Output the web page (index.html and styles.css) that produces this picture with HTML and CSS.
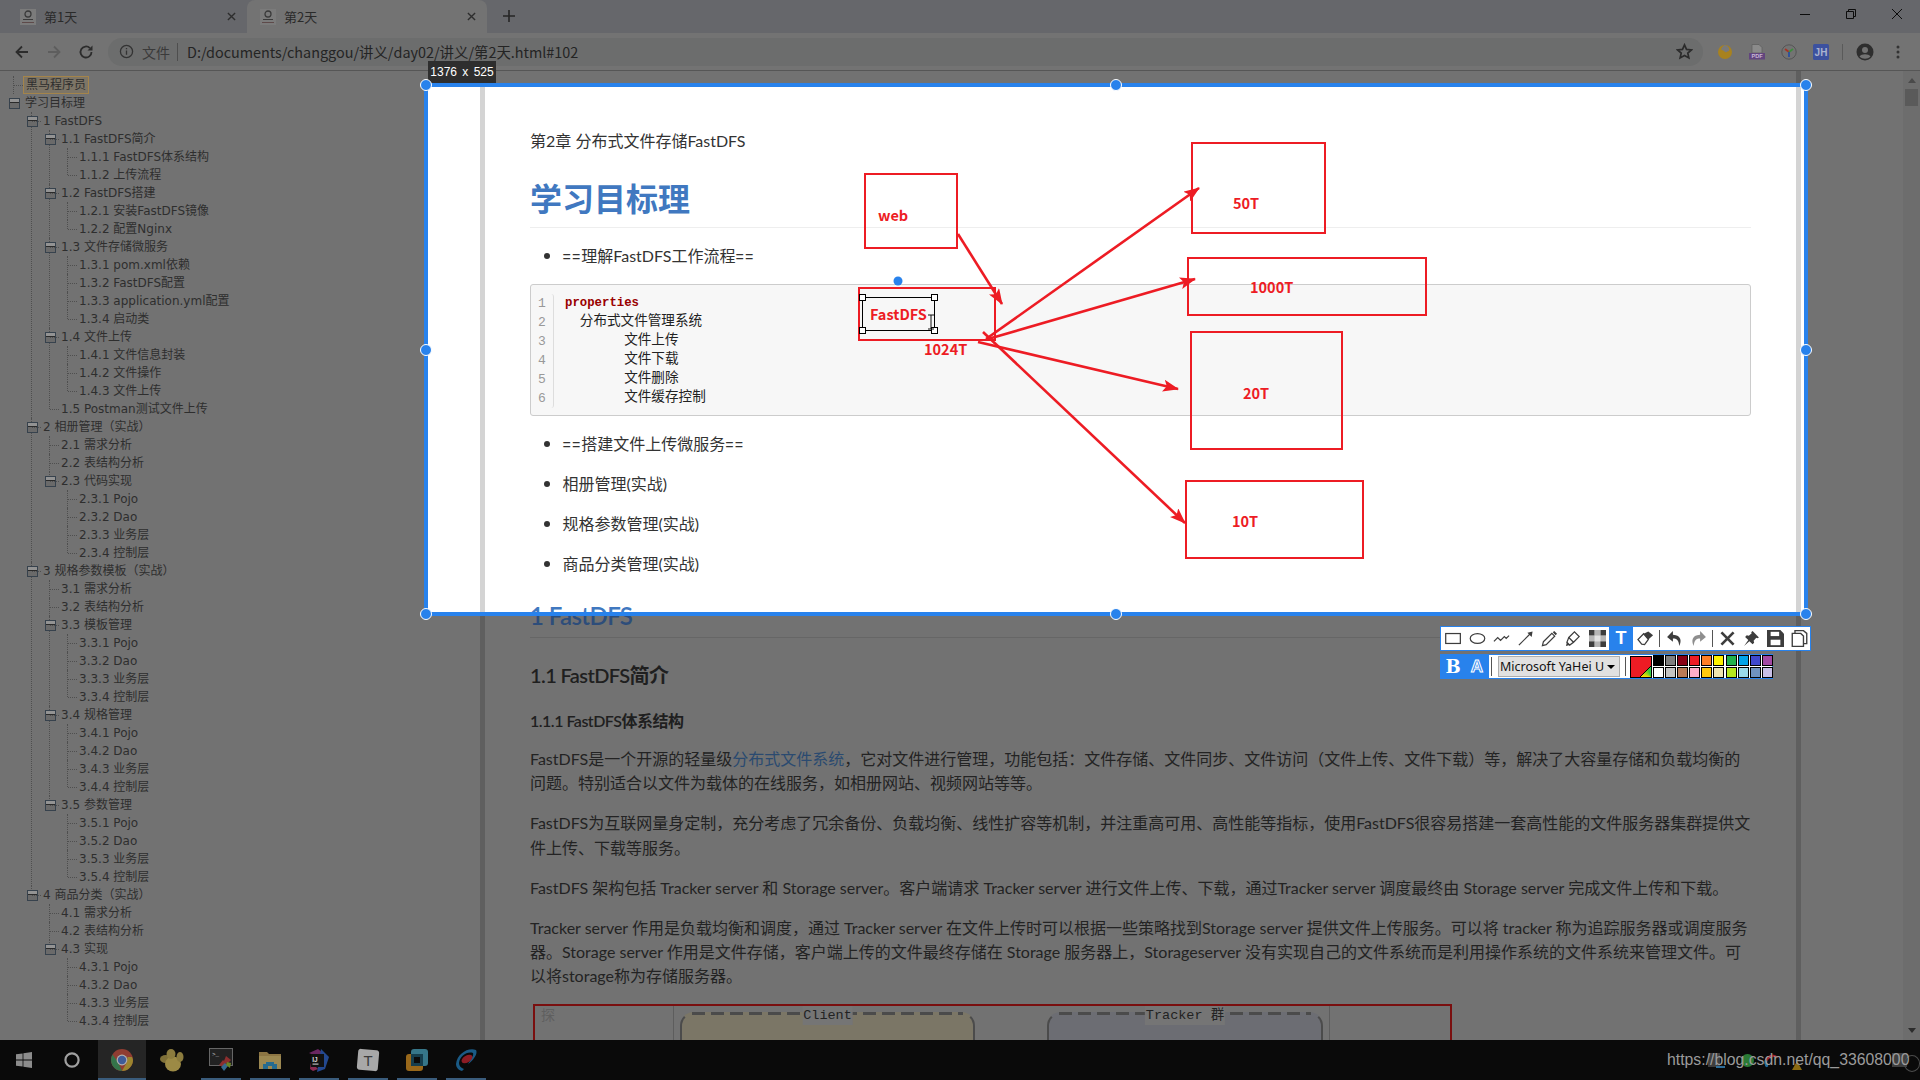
FILE: index.html
```html
<!DOCTYPE html>
<html lang="zh-CN">
<head>
<meta charset="utf-8">
<title>第2天</title>
<link rel="stylesheet" href="styles.css">
</head>
<body>
<div class="screen">

  <header class="tabbar">
    <div class="tab">
      <svg class="favicon" viewBox="0 0 16 16"><rect width="16" height="16" fill="#7b7b7b"/><circle cx="8" cy="5" r="3" fill="none" stroke="#3a3a3a" stroke-width="1.3"/><path d="M3 10h10v1H3z" fill="#3a3a3a"/><path d="M2 13h12v1H2z" fill="#5e4a4a"/></svg>
      <span class="tab-title">第1天</span>
      <svg class="tab-x" viewBox="0 0 10 10"><path d="M1 1l8 8M9 1L1 9"/></svg>
    </div>
    <div class="tab active">
      <svg class="favicon" viewBox="0 0 16 16"><rect width="16" height="16" fill="#7b7b7b"/><circle cx="8" cy="5" r="3" fill="none" stroke="#3a3a3a" stroke-width="1.3"/><path d="M3 10h10v1H3z" fill="#3a3a3a"/><path d="M2 13h12v1H2z" fill="#5e4a4a"/></svg>
      <span class="tab-title">第2天</span>
      <svg class="tab-x" viewBox="0 0 10 10"><path d="M1 1l8 8M9 1L1 9"/></svg>
    </div>
    <svg class="tab-new" viewBox="0 0 12 12"><path d="M6 0v12M0 6h12"/></svg>
    <div class="win-controls">
      <svg viewBox="0 0 12 12"><path d="M1 6.5h10"/></svg>
      <svg viewBox="0 0 12 12"><path d="M1.5 3.5h7v7h-7zM3.5 3.5v-2h7v7h-2"/></svg>
      <svg viewBox="0 0 12 12"><path d="M1 1l10 10M11 1L1 11"/></svg>
    </div>
  </header>

  <nav class="toolbar">
    <svg class="nav-ico" viewBox="0 0 16 16"><path d="M14 8H3M8 2.5L2.5 8 8 13.5"/></svg>
    <svg class="nav-ico faded" viewBox="0 0 16 16"><path d="M2 8h11M8 2.5L13.5 8 8 13.5"/></svg>
    <svg class="nav-ico" viewBox="0 0 16 16"><path d="M13.5 8a5.5 5.5 0 1 1-1.6-3.9"/><path class="fill" d="M14.5 1.5v5h-5z"/></svg>
    <div class="omnibox">
      <svg class="info" viewBox="0 0 16 16"><circle cx="8" cy="8" r="6.5"/><path d="M8 7v4.5M8 4.2v1.4"/></svg>
      <span class="scheme">文件</span>
      <span class="omni-sep"></span>
      <span class="url">D:/documents/changgou/讲义/day02/讲义/第2天.html#102</span>
      <svg class="star" viewBox="0 0 16 16"><path d="M8 1.8l1.9 4.2 4.6.5-3.4 3 1 4.5L8 11.7 3.9 14l1-4.5-3.4-3 4.6-.5z"/></svg>
    </div>
    <div class="ext-row">
      <svg class="ext" viewBox="0 0 16 16"><circle cx="8" cy="8" r="7" fill="#a8821f"/><path d="M8 1c3 1 5 3 4 6-2 0-2 2-4 1-1-2-3-1-4-3 1-2 2-3 4-4z" fill="#7a7a7a"/></svg>
      <svg class="ext" viewBox="0 0 16 16"><path d="M3 .5h7l3 3V9H3z" fill="#8b8b8b" stroke="#5c5c5c" stroke-width=".7"/><rect y="9" width="16" height="6.5" fill="#62457e"/><text class="ext-pdf" x="8" y="14.4">PDF</text></svg>
      <svg class="ext" viewBox="0 0 16 16"><circle cx="8" cy="8" r="7.2" fill="none" stroke="#555"/><path d="M8 8L4 5" stroke="#a63327" stroke-width="1.8"/><path d="M8 8l4-3" stroke="#3f8a3f" stroke-width="1.8"/><path d="M8 8v5" stroke="#2b4f9e" stroke-width="1.8"/></svg>
      <svg class="ext" viewBox="0 0 16 16"><rect width="16" height="16" rx="1.5" fill="#3c519f"/><text class="ext-jh" x="8" y="11.5">JH</text></svg>
    </div>
    <span class="tool-sep"></span>
    <svg class="avatar" viewBox="0 0 18 18"><circle cx="9" cy="9" r="8.5" fill="#2e2e2e"/><circle cx="9" cy="7" r="3" fill="#727272"/><path d="M3.5 13.5c2-3 9-3 11 0-3 3-8 3-11 0z" fill="#727272"/></svg>
    <svg class="kebab" viewBox="0 0 4 14"><circle cx="2" cy="2" r="1.5"/><circle cx="2" cy="7" r="1.5"/><circle cx="2" cy="12" r="1.5"/></svg>
  </nav>

  <main class="page">
    <aside class="sidebar">
      <ul class="tree root">
        <li class="first"><div class="row sel"><span class="label">黑马程序员</span></div></li>
        <li><div class="row open"><span class="label">学习目标理</span></div>
          <ul class="tree">
            <li class="cont"><div class="row open"><span class="label">1 FastDFS</span></div>
              <ul class="tree">
                <li class="cont"><div class="row open"><span class="label">1.1 FastDFS简介</span></div>
                  <ul class="tree">
                    <li class="cont"><div class="row"><span class="label">1.1.1 FastDFS体系结构</span></div></li>
                    <li><div class="row"><span class="label">1.1.2 上传流程</span></div></li>
                  </ul></li>
                <li class="cont"><div class="row open"><span class="label">1.2 FastDFS搭建</span></div>
                  <ul class="tree">
                    <li class="cont"><div class="row"><span class="label">1.2.1 安装FastDFS镜像</span></div></li>
                    <li><div class="row"><span class="label">1.2.2 配置Nginx</span></div></li>
                  </ul></li>
                <li class="cont"><div class="row open"><span class="label">1.3 文件存储微服务</span></div>
                  <ul class="tree">
                    <li class="cont"><div class="row"><span class="label">1.3.1 pom.xml依赖</span></div></li>
                    <li class="cont"><div class="row"><span class="label">1.3.2 FastDFS配置</span></div></li>
                    <li class="cont"><div class="row"><span class="label">1.3.3 application.yml配置</span></div></li>
                    <li><div class="row"><span class="label">1.3.4 启动类</span></div></li>
                  </ul></li>
                <li class="cont"><div class="row open"><span class="label">1.4 文件上传</span></div>
                  <ul class="tree">
                    <li class="cont"><div class="row"><span class="label">1.4.1 文件信息封装</span></div></li>
                    <li class="cont"><div class="row"><span class="label">1.4.2 文件操作</span></div></li>
                    <li><div class="row"><span class="label">1.4.3 文件上传</span></div></li>
                  </ul></li>
                <li><div class="row"><span class="label">1.5 Postman测试文件上传</span></div></li>
              </ul></li>
            <li class="cont"><div class="row open"><span class="label">2 相册管理（实战）</span></div>
              <ul class="tree">
                <li class="cont"><div class="row"><span class="label">2.1 需求分析</span></div></li>
                <li class="cont"><div class="row"><span class="label">2.2 表结构分析</span></div></li>
                <li><div class="row open"><span class="label">2.3 代码实现</span></div>
                  <ul class="tree">
                    <li class="cont"><div class="row"><span class="label">2.3.1 Pojo</span></div></li>
                    <li class="cont"><div class="row"><span class="label">2.3.2 Dao</span></div></li>
                    <li class="cont"><div class="row"><span class="label">2.3.3 业务层</span></div></li>
                    <li><div class="row"><span class="label">2.3.4 控制层</span></div></li>
                  </ul></li>
              </ul></li>
            <li class="cont"><div class="row open"><span class="label">3 规格参数模板（实战）</span></div>
              <ul class="tree">
                <li class="cont"><div class="row"><span class="label">3.1 需求分析</span></div></li>
                <li class="cont"><div class="row"><span class="label">3.2 表结构分析</span></div></li>
                <li class="cont"><div class="row open"><span class="label">3.3 模板管理</span></div>
                  <ul class="tree">
                    <li class="cont"><div class="row"><span class="label">3.3.1 Pojo</span></div></li>
                    <li class="cont"><div class="row"><span class="label">3.3.2 Dao</span></div></li>
                    <li class="cont"><div class="row"><span class="label">3.3.3 业务层</span></div></li>
                    <li><div class="row"><span class="label">3.3.4 控制层</span></div></li>
                  </ul></li>
                <li class="cont"><div class="row open"><span class="label">3.4 规格管理</span></div>
                  <ul class="tree">
                    <li class="cont"><div class="row"><span class="label">3.4.1 Pojo</span></div></li>
                    <li class="cont"><div class="row"><span class="label">3.4.2 Dao</span></div></li>
                    <li class="cont"><div class="row"><span class="label">3.4.3 业务层</span></div></li>
                    <li><div class="row"><span class="label">3.4.4 控制层</span></div></li>
                  </ul></li>
                <li><div class="row open"><span class="label">3.5 参数管理</span></div>
                  <ul class="tree">
                    <li class="cont"><div class="row"><span class="label">3.5.1 Pojo</span></div></li>
                    <li class="cont"><div class="row"><span class="label">3.5.2 Dao</span></div></li>
                    <li class="cont"><div class="row"><span class="label">3.5.3 业务层</span></div></li>
                    <li><div class="row"><span class="label">3.5.4 控制层</span></div></li>
                  </ul></li>
              </ul></li>
            <li><div class="row open"><span class="label">4 商品分类（实战）</span></div>
              <ul class="tree">
                <li class="cont"><div class="row"><span class="label">4.1 需求分析</span></div></li>
                <li class="cont"><div class="row"><span class="label">4.2 表结构分析</span></div></li>
                <li><div class="row open"><span class="label">4.3 实现</span></div>
                  <ul class="tree">
                    <li class="cont"><div class="row"><span class="label">4.3.1 Pojo</span></div></li>
                    <li class="cont"><div class="row"><span class="label">4.3.2 Dao</span></div></li>
                    <li class="cont"><div class="row"><span class="label">4.3.3 业务层</span></div></li>
                    <li><div class="row"><span class="label">4.3.4 控制层</span></div></li>
                  </ul></li>
              </ul></li>
          </ul></li>
      </ul>
    </aside>

    <div class="strip"></div>
    <article class="doc dim below">
      <h2>1 FastDFS</h2>
      <h3>1.1 FastDFS简介</h3>
      <h4>1.1.1 FastDFS体系结构</h4>
      <p>FastDFS是一个开源的轻量级<a>分布式文件系统</a>，它对文件进行管理，功能包括：文件存储、文件同步、文件访问（文件上传、文件下载）等，解决了大容量存储和负载均衡的<br>问题。特别适合以文件为载体的在线服务，如相册网站、视频网站等等。</p>
      <p>FastDFS为互联网量身定制，充分考虑了冗余备份、负载均衡、线性扩容等机制，并注重高可用、高性能等指标，使用FastDFS很容易搭建一套高性能的文件服务器集群提供文<br>件上传、下载等服务。</p>
      <p>FastDFS 架构包括 Tracker server 和 Storage server。客户端请求 Tracker server 进行文件上传、下载，通过Tracker server 调度最终由 Storage server 完成文件上传和下载。</p>
      <p>Tracker server 作用是负载均衡和调度，通过 Tracker server 在文件上传时可以根据一些策略找到Storage server 提供文件上传服务。可以将 tracker 称为追踪服务器或调度服务<br>器。Storage server 作用是文件存储，客户端上传的文件最终存储在 Storage 服务器上，Storageserver 没有实现自己的文件系统而是利用操作系统的文件系统来管理文件。可<br>以将storage称为存储服务器。</p>
      <div class="figure">
        <div class="fig-left">探</div>
        <div class="fig-mid">
          <div class="group client"><span class="group-label">Client</span></div>
          <div class="group tracker"><span class="group-label">Tracker 群</span></div>
        </div>
      </div>
    </article>
    <div class="strip"></div>
    <div class="page-rest"></div>
    <div class="scrollbar">
      <span class="sb-up"></span>
      <span class="sb-thumb"></span>
      <span class="sb-down"></span>
    </div>
  </main>

  <footer class="taskbar">
    <svg class="start" viewBox="0 0 16 16"><path d="M0 2.3l6.6-.9v6.2H0zM7.4 1.3L16 0v7.6H7.4zM0 8.4h6.6v6.2L0 13.7zM7.4 8.4H16V16l-8.6-1.3z"/></svg>
    <svg class="cortana" viewBox="0 0 16 16"><circle cx="8" cy="8" r="6.6"/></svg>
    <div class="app current"><svg viewBox="0 0 24 24"><circle cx="12" cy="12" r="11" fill="#8f3d32"/><path d="M12 23A11 11 0 0 1 2.5 6.5L8 14z" fill="#34744a"/><path d="M23 12a11 11 0 0 1-11 11l5-9 .5-5H22z" fill="#9c852f"/><circle cx="12" cy="12" r="5.4" fill="#b0b0b0"/><circle cx="12" cy="12" r="4.2" fill="#3f5c99"/></svg><i></i></div>
    <div class="app"><svg viewBox="0 0 24 24"><ellipse cx="5.5" cy="11" rx="5.5" ry="4" fill="#7f7038"/><ellipse cx="13" cy="16" rx="8" ry="7.5" fill="#9c8a45"/><ellipse cx="20" cy="9" rx="3.5" ry="5" fill="#8c7c3e"/><ellipse cx="11" cy="6" rx="4.500" ry="5" fill="#8c7c3e"/></svg><i class="off"></i></div>
    <div class="app"><svg viewBox="0 0 24 24"><rect x="0.5" y="0.5" width="23" height="17" fill="#222" stroke="#666"/><path d="M10 17l4-5 3 3-3 4zM17 8l5 4-4 4-3-3z" fill="#8c2e2e"/><path d="M12 19l4-4 3 3-4 5z" fill="#35698c"/><path d="M18 14l4 1-1 5-4-3z" fill="#6a8326"/><text class="term" x="3" y="8">&gt;_</text></svg><i></i></div>
    <div class="app"><svg viewBox="0 0 24 24"><path d="M1 4h8l2 2h12v15H1z" fill="#8c7543"/><path d="M1 8h22v13H1z" fill="#9c8851"/><path d="M8 14h8v2h3v5h-5v-3h-4v3H5v-5h3z" fill="#266b8f"/></svg><i></i></div>
    <div class="app"><svg viewBox="0 0 24 24"><path d="M2 5l9-4 5 4-5 4z" fill="#692661"/><path d="M14 1l8 8-4 12-8 3z" fill="#23488f"/><path d="M4 14l7 7-5 2-3-2z" fill="#8c2b52"/><rect x="4" y="6" width="13" height="13" fill="#111"/><text class="ij" x="5.2" y="13.5">IJ</text><rect x="5.5" y="15.500" width="6" height="1.2" fill="#bbb"/></svg><i></i></div>
    <div class="app"><svg viewBox="0 0 24 24"><rect x="1.5" y="1.5" width="21" height="21" rx="3" fill="#a8a8a8" transform="rotate(5 12 12)"/><text class="typora" x="12" y="17.5">T</text></svg><i></i></div>
    <div class="app"><svg viewBox="0 0 24 24"><rect x="6" y="1" width="17" height="17" rx="3" fill="#367689"/><rect x="1" y="6" width="17" height="17" rx="3" fill="#99681a"/><rect x="6" y="6" width="12" height="12" fill="#163e4d"/><rect x="9" y="9" width="6" height="6" fill="#0a0a0a"/></svg><i></i></div>
    <div class="app"><svg viewBox="0 0 24 24"><path d="M2 16C3 6 14-1 22 2c2 3-2 10-8 14 3-5 6-9 5-11C13 3 6 8 5 15c0 3 2 5 5 6l-2 2c-4-1-6-4-6-7z" fill="#1a5a85"/><ellipse cx="13" cy="11" rx="6" ry="3.4" transform="rotate(-30 13 11)" fill="#8c1c24"/></svg><i></i></div>
    <div class="tray">
      <span class="tray-grid"></span>
      <span class="tray-bar"></span>
      <span class="tray-green"></span>
      <span class="tray-swoosh"></span>
      <span class="tray-warn"></span>
      <span class="tray-box"></span>
      <span class="tray-action"></span>
    </div>
  </footer>

  <section class="selection">
    <div class="size-tip">1376 x 525</div>
    <div class="sel-clip">
      <div class="gutter-white"></div>
      <div class="strip lit-strip"></div>
      <article class="doc lit">
        <div class="chapter">第2章 分布式文件存储FastDFS</div>
        <h1>学习目标理</h1>
        <ul class="bullets top">
          <li><span class="eq">==</span>理解FastDFS工作流程<span class="eq">==</span></li>
        </ul>
        <div class="code">
          <div class="lines"><span>1</span><span>2</span><span>3</span><span>4</span><span>5</span><span>6</span></div>
          <pre class="src"><b>properties</b>
  <span class="zh">分布式文件管理系统</span>
        <span class="zh">文件上传</span>
        <span class="zh">文件下载</span>
        <span class="zh">文件删除</span>
        <span class="zh">文件缓存控制</span></pre>
        </div>
        <ul class="bullets">
          <li><span class="eq">==</span>搭建文件上传微服务<span class="eq">==</span></li>
          <li>相册管理(实战)</li>
          <li>规格参数管理(实战)</li>
          <li>商品分类管理(实战)</li>
        </ul>
        <h2>1 FastDFS</h2>
      </article>
      <div class="strip lit-strip"></div>
      <div class="gutter-white thin"></div>

      <svg class="marks" viewBox="428 87 1376 525">
        <defs>
          <marker id="head" markerUnits="userSpaceOnUse" markerWidth="16" markerHeight="12" viewBox="0 0 16 12" refX="15" refY="6" orient="auto">
            <path d="M0 0L16 6 0 12 3.5 6z" fill="#ed1c24"/>
          </marker>
        </defs>
        <g class="box">
          <rect x="865" y="174" width="92" height="74"/>
          <rect x="859" y="288" width="136" height="52"/>
          <rect x="1192" y="143" width="133" height="90"/>
          <rect x="1188" y="258" width="238" height="57"/>
          <rect x="1191" y="332" width="151" height="117"/>
          <rect x="1186" y="481" width="177" height="77"/>
        </g>
        <g class="arrow">
          <line x1="958" y1="234" x2="1002" y2="304"/>
          <line x1="986" y1="339" x2="1199" y2="188"/>
          <line x1="988" y1="339" x2="1195" y2="279"/>
          <line x1="978" y1="342" x2="1178" y2="389"/>
          <line x1="983" y1="332" x2="1185" y2="523"/>
        </g>
        <g class="mark-text">
          <text x="878" y="221">web</text>
          <text x="870" y="320">FastDFS</text>
          <text x="924" y="355">1024T</text>
          <text x="1233" y="209">50T</text>
          <text x="1250" y="293">1000T</text>
          <text x="1243" y="399">20T</text>
          <text x="1232" y="527">10T</text>
        </g>
        <rect class="text-frame" x="862.5" y="297.5" width="72" height="33"/>
        <g class="frame-handles">
          <rect x="859.5" y="294.5" width="6" height="6"/>
          <rect x="931.5" y="294.5" width="6" height="6"/>
          <rect x="859.5" y="327.5" width="6" height="6"/>
          <rect x="931.5" y="327.5" width="6" height="6"/>
        </g>
        <path class="ibeam" d="M928 315h6M931 315v14M928 329h6"/>
        <circle class="rotate" cx="898" cy="281" r="4.5"/>
      </svg>
    </div>
    <span class="handle h-tl"></span><span class="handle h-tc"></span><span class="handle h-tr"></span>
    <span class="handle h-ml"></span><span class="handle h-mr"></span>
    <span class="handle h-bl"></span><span class="handle h-bc"></span><span class="handle h-br"></span>
  </section>

  <div class="snip-tools">
    <div class="snip-row">
      <span class="tb"><svg viewBox="0 0 18 14"><rect x=".75" y="1.75" width="15.5" height="10.5"/></svg></span>
      <span class="tb"><svg viewBox="0 0 18 14"><ellipse cx="9" cy="7" rx="7.7" ry="5.2"/></svg></span>
      <span class="tb"><svg viewBox="0 0 18 14"><path d="M1 10l4-4 3 3 4-4 2 2 3-3"/></svg></span>
      <span class="tb"><svg viewBox="0 0 18 18"><path d="M2 16L14 4"/><path class="solid" d="M16.5 1.5l-1 6-4.5-4.500z"/></svg></span>
      <span class="tb"><svg viewBox="0 0 18 18"><path d="M2.500 12.500L11.500 3.500l3 3-9 9-4 1z"/><path class="solid" d="M12.500 2.500l1.500-1.500 3 3-1.500 1.500z"/></svg></span>
      <span class="tb"><svg viewBox="0 0 18 18"><path d="M4 8l6-6 5 5-6 6z"/><path d="M4 8l-2 5 3 3 4-3"/><path class="solid" d="M2 13l3 3-4 1z"/></svg></span>
      <span class="tb"><svg viewBox="0 0 15 15"><rect class="mo" width="5" height="5"/><rect class="mo" x="10" width="5" height="5"/><rect class="mo mid" x="5" y="5" width="5" height="5"/><rect class="mo lt" x="5" width="5" height="5"/><rect class="mo lt" y="5" width="5" height="5"/><rect class="mo lt" x="10" y="5" width="5" height="5"/><rect class="mo" y="10" width="5" height="5"/><rect class="mo lt" x="5" y="10" width="5" height="5"/><rect class="mo" x="10" y="10" width="5" height="5"/></svg></span>
      <span class="tb on"><span class="tb-t">T</span></span>
      <span class="tb"><svg viewBox="0 0 18 16"><path class="solid" d="M7 3l5-2.500 5 4-5 4.500z"/><path d="M7 3L1 9l4 5 3 .5 4-5.500z"/></svg></span>
      <span class="snip-sep"></span>
      <span class="tb"><svg viewBox="0 0 16 16"><path class="solid" d="M6.500 1L1 6.500 6.500 11V8c3.500 0 5.500 1.500 6 7 2-4 2.500-10-6-10.500z"/></svg></span>
      <span class="tb"><svg viewBox="0 0 16 16"><path class="solid grey" d="M9.500 1L15 6.500 9.500 11V8c-3.500 0-5.500 1.500-6 7-2-4-2.500-10 6-10.500z"/></svg></span>
      <span class="snip-sep"></span>
      <span class="tb"><svg viewBox="0 0 14 14"><path class="heavy" d="M2 2l10 10M12 2L2 12"/></svg></span>
      <span class="tb"><svg viewBox="0 0 16 16"><path class="solid" d="M9 1l6 6-1.500.8-1-.5L10 10l.5 2-1.500 1.500-3-3L1 15l4-5.500-3-3L3.500 5l2 .5 2.700-2.500-.5-1z"/></svg></span>
      <span class="tb"><svg viewBox="0 0 14 14"><path class="solid" d="M0 0h11l3 3v11H0z"/><rect class="hole" x="3" y="1.500" width="7" height="3.500"/><rect class="hole" x="3" y="8" width="8" height="4.500"/></svg></span>
      <span class="tb"><svg viewBox="0 0 14 15"><path class="copy" d="M3 3V.6h7.500L13.400 3v9H10.500M.6 3h7.500l2.400 2.400v9H.6z"/></svg></span>
    </div>
    <div class="snip-row second">
      <div class="style-btns">
        <span class="tb"><span class="tb-b">B</span></span>
        <span class="tb"><span class="tb-a">A</span></span>
      </div>
      <span class="opt-sep"></span>
      <div class="font-select"><span class="font-name">Microsoft YaHei U</span><span class="caret"></span></div>
      <span class="opt-sep right"></span>
      <div class="color-now"></div>
      <div class="swatches">
        <i class="c1"></i><i class="c2"></i><i class="c3"></i><i class="c4"></i><i class="c5"></i><i class="c6"></i><i class="c7"></i><i class="c8"></i><i class="c9"></i><i class="c10"></i>
        <i class="c11"></i><i class="c12"></i><i class="c13"></i><i class="c14"></i><i class="c15"></i><i class="c16"></i><i class="c17"></i><i class="c18"></i><i class="c19"></i><i class="c20"></i>
      </div>
    </div>
  </div>

  <div class="watermark">https://blog.csdn.net/qq_33608000</div>
</div>
</body>
</html>
```
FILE: styles.css
```css
* { box-sizing: border-box; }
html, body { margin: 0; padding: 0; }
body { background: #000; font-family: "Noto Sans CJK SC", "Noto Sans", sans-serif; }
ul { list-style: none; margin: 0; padding: 0; }

.screen { position: relative; width: 1920px; height: 1080px; overflow: hidden; display: flex; flex-direction: column; background: #727272; }

/* Tab strip */
.tabbar { height: 33px; flex: none; display: flex; align-items: stretch; background: #66676b; }
.tab { width: 240px; margin-left: 7px; display: flex; align-items: center; padding: 0 10px 0 13px; color: #2a2a2a; font-size: 13px; }
.tab.active { background: #737373; border-radius: 8px 8px 0 0; margin-left: 0; padding-left: 13px; }
.favicon { width: 16px; height: 16px; flex: none; }
.tab-title { margin-left: 8px; flex: 1; }
.tab-x { width: 9px; height: 9px; fill: none; stroke: #2d2d2d; stroke-width: 1.5; margin-right: 1px; }
.tab-new { width: 12px; height: 12px; margin: 10px 0 0 16px; fill: none; stroke: #262626; stroke-width: 1.6; }
.win-controls { margin-left: auto; display: flex; align-items: center; gap: 34px; padding-right: 17px; }
.win-controls svg { width: 12px; height: 12px; fill: none; stroke: #0c0c0c; stroke-width: 1; margin-top: -5px; }

/* Address toolbar */
.toolbar { height: 38px; flex: none; display: flex; align-items: center; background: #737373; border-bottom: 1px solid #565656; padding-left: 14px; }
.nav-ico { width: 16px; height: 16px; margin-right: 16px; fill: none; stroke: #2c2c2c; stroke-width: 1.8; flex: none; }
.nav-ico.faded { stroke: #5e5e5e; }
.nav-ico .fill { fill: #2c2c2c; stroke: none; }
.omnibox { width: 1595px; margin-left: -2px; height: 28px; flex: none; border-radius: 14px; background: #6c6d6d; display: flex; align-items: center; padding-left: 11px; color: #242424; }
.info { width: 15px; height: 15px; fill: none; stroke: #333; stroke-width: 1.4; flex: none; }
.scheme { margin-left: 8px; font-size: 14px; color: #3a3a3a; }
.omni-sep { width: 1px; height: 18px; background: #4e4e4e; margin: 0 9px 0 7px; }
.url { font-size: 14.4px; }
.star { width: 17px; height: 17px; margin-left: auto; margin-right: 10px; fill: none; stroke: #2b2b2b; stroke-width: 1.6; }
.ext-row { display: flex; gap: 16px; margin-left: 14px; }
.ext { width: 16px; height: 16px; }
.ext-pdf { font: bold 5.6px "Liberation Sans", sans-serif; text-anchor: middle; fill: #c9b9d6; }
.ext-jh { font: bold 10px "Liberation Sans", sans-serif; text-anchor: middle; fill: #aab3cf; }
.tool-sep { width: 1px; height: 16px; background: #5a5a5a; margin: 0 13px; }
.avatar { width: 18px; height: 18px; }
.kebab { width: 4px; height: 14px; margin-left: 22px; fill: #333; }

/* Page area */
.page { flex: 1; min-height: 0; display: flex; background: #727272; }
.sidebar { width: 480px; flex: none; overflow: hidden; padding: 5px 0 0 13px; color: #2e2e2e; font: 12px/18px "DejaVu Sans", "Noto Sans CJK SC", sans-serif; }
.strip { width: 5px; flex: none; background: #5f5f5f; }
.page-rest { width: 102px; flex: none; }
.scrollbar { width: 17px; flex: none; margin-left: auto; background: #6d6d6d; position: relative; display: flex; flex-direction: column; align-items: center; }
.sb-up { margin-top: 7px; border: 4px solid transparent; border-top: 0; border-bottom: 5px solid #4a4a4a; }
.sb-thumb { width: 13px; height: 17px; margin-top: 6px; background: #5a5a5a; }
.sb-down { margin-top: auto; margin-bottom: 7px; border: 4px solid transparent; border-bottom: 0; border-top: 5px solid #2c2c2c; }

/* Tree */
.tree .tree { margin-left: 17px; }
.tree li { border-left: 1px dotted transparent; }
.tree li.cont { border-left-color: #4f4f4f; }
.root > li.first { border-left-color: #4f4f4f; }
.row { height: 18px; position: relative; padding-left: 11px; white-space: nowrap; }
.row::after { content: ""; position: absolute; left: 0; top: 9px; width: 9px; border-top: 1px dotted #4f4f4f; }
.tree li:not(.cont):not(.first) > .row::before { content: ""; position: absolute; left: -1px; top: 0; height: 9px; border-left: 1px dotted #4f4f4f; }
.root > li:not(.first) > .row::before { display: none; }
.root > li:not(.first) > .row::after { display: none; }
.row.open .label::before { content: ""; position: absolute; left: -5px; top: 4px; width: 9px; height: 9px; border: 1px solid #37424d; background: linear-gradient(#939393 0 3px, #2a2a2a 3px 4px, #6a6a6a 4px); background-clip: padding-box; }
.sel .label { display: inline-block; height: 18px; line-height: 16px; padding: 0 2px; margin-left: -2px; background: #7d7566; border: 1px solid #a4844a; }
.label { display: inline-block; }

/* Document */
.doc { width: 1311px; flex: none; padding: 0 45px; white-space: nowrap; font-family: "Lato", "Noto Sans CJK SC", sans-serif; font-size: 16px; color: #232323; }
.doc.below { padding-top: 527px; overflow: hidden; }
.doc h1, .doc h2, .doc h3, .doc h4, .doc p { margin: 0; }
.doc h2 { font-size: 24px; font-weight: 600; letter-spacing: -0.6px; line-height: 36px; padding-bottom: 3px; border-bottom: 1px solid #666; color: #2d4d7a; }
.doc h3 { font-size: 20px; font-weight: 600; letter-spacing: -0.6px; line-height: 30px; margin-top: 22px; color: #1f1f1f; }
.doc h4 { font-size: 16px; font-weight: 600; letter-spacing: -0.5px; line-height: 24px; margin-top: 19px; color: #1f1f1f; }
.doc p { line-height: 24.4px; margin-top: 15.5px; }
.doc h4 + p { margin-top: 14px; }
.doc a { color: #2a4a70; }

.figure { margin: 15px 0 0 3px; width: 919px; height: 40px; border: 2px solid #7a0f0f; border-bottom: 0; display: flex; overflow: hidden; }
.fig-left { width: 138px; flex: none; font-size: 14px; color: #5f5f5f; line-height: 18px; padding-left: 6px; }
.fig-mid { width: 657px; flex: none; border-left: 1px solid #5d5d5d; border-right: 1px solid #5d5d5d; display: flex; padding: 6px 6px 0 6px; justify-content: space-between; }
.group { position: relative; border: 2px solid #4b4b4b; border-top-color: transparent; border-bottom: 0; border-radius: 14px 14px 0 0; height: 40px; }
.group::before { content: ""; position: absolute; left: 10px; right: 10px; top: -2px; height: 3px; background: repeating-linear-gradient(90deg, #4b4b4b 0 13px, transparent 13px 19px); }
.group.client { width: 295px; background: #7b7666; }
.group.tracker { width: 276px; background: #6c6d73; }
.group-label { position: absolute; top: -8px; left: 50%; transform: translateX(-50%); background: #757575; font: 13.5px/19px "Liberation Mono", "Noto Sans CJK SC", monospace; color: #222; padding: 0 1px; white-space: nowrap; z-index: 1; }

/* Lit document in the capture window */
.doc.lit { padding-top: 42px; color: #333; background: #fff; height: 525px; overflow: hidden; }
.chapter { line-height: 24px; }
.doc.lit h1 { font-family: "Noto Sans CJK SC", sans-serif; font-size: 32px; font-weight: 700; letter-spacing: 0; line-height: 44px; margin-top: 22px; padding-bottom: 8px; border-bottom: 1px solid #eee; color: #4078c0; }
.doc.lit h2 { color: #4078c0; border-bottom-color: #eee; margin-top: 22px; }
.bullets { margin-top: 16px; padding-left: 32.5px; }
.bullets.top { margin-top: 16px; }
.bullets li { line-height: 24px; position: relative; }
.bullets li + li { margin-top: 16px; }
.bullets li::before { content: ""; position: absolute; left: -19px; top: 9px; width: 6px; height: 6px; border-radius: 50%; background: #333; }
.eq { font-family: "Liberation Mono", monospace; font-size: 14px; line-height: 1; letter-spacing: 1px; }
.code { margin-top: 16px; height: 132px; background: #f7f7f7; border: 1px solid #ccc; border-radius: 3px; padding: 9px 0 0 0; display: flex; }
.lines { width: 23px; height: 114px; flex: none; display: flex; flex-direction: column; align-items: center; border-right: 1px solid #ddd; color: #999; font: 13px/19px "Liberation Mono", monospace; border-radius: 0 3px 3px 0; }
.lines span { display: block; }
.src { margin: 0 0 0 11px; font: 12.33px/19px "Liberation Mono", monospace; color: #222; }
.src b { color: #990000; font-weight: 700; }
.src .zh { font-family: "Noto Sans CJK SC", sans-serif; font-size: 13.6px; line-height: 1; }

/* Capture selection */
.selection { position: absolute; left: 424px; top: 83px; width: 1384px; height: 533px; border: 4px solid #2882ec; }
.size-tip { position: absolute; left: 0; top: -26px; width: 68px; height: 22px; background: #2e2e2e; color: #fff; font: 12px/22px "Liberation Sans", sans-serif; text-align: center; white-space: pre; word-spacing: 2px; }
.sel-clip { position: relative; width: 1376px; height: 525px; overflow: hidden; display: flex; background: #fff; }
.gutter-white { width: 52px; flex: none; background: #fff; }
.gutter-white.thin { width: 3px; }
.lit-strip { background: #d4d4d4; }
.marks { position: absolute; left: 0; top: 0; width: 1376px; height: 525px; }
.box rect { fill: none; stroke: #ed1c24; stroke-width: 2; }
.arrow line { stroke: #ed1c24; stroke-width: 2.6; marker-end: url(#head); }
.mark-text text { font: 700 14.5px "Noto Sans CJK SC", sans-serif; fill: #ed1c24; }
.text-frame { fill: none; stroke: #000; stroke-width: 1; }
.frame-handles rect { fill: #fff; stroke: #000; stroke-width: 1; }
.ibeam { fill: none; stroke: #111; stroke-width: 1; }
.rotate { fill: #2882ec; }
.handle { position: absolute; width: 12px; height: 12px; border-radius: 50%; background: #2882ec; border: 1px solid #fff; }
.h-tl, .h-tc, .h-tr { top: -8px; }
.h-ml, .h-mr { top: calc(50% - 6px); }
.h-bl, .h-bc, .h-br { bottom: -8px; }
.h-tl, .h-ml, .h-bl { left: -8px; }
.h-tc, .h-bc { left: calc(50% - 6px); }
.h-tr, .h-mr, .h-br { right: -8px; }

/* Snip toolbar */
.snip-tools { position: absolute; left: 1440px; top: 626px; display: flex; flex-direction: column; gap: 3px; }
.snip-row { width: 371px; height: 25px; display: flex; align-items: stretch; background: #fff; border: 1px solid #2882ec; }
.snip-row.second { width: 333px; align-items: center; }
.tb { width: 24px; flex: none; display: flex; align-items: center; justify-content: center; }
.tb svg { width: 17px; height: 17px; fill: none; stroke: #3d3d3d; stroke-width: 1.3; }
.tb .solid { fill: #3d3d3d; stroke: none; }
.tb .solid.grey { fill: #8e8e8e; }
.tb .heavy { stroke-width: 2.2; }
.tb .mo { fill: #3d3d3d; stroke: none; }
.tb .mo.lt { fill: #b5b5b5; }
.tb .mo.mid { fill: #e2e2e2; }
.tb .hole { fill: #fff; stroke: none; }
.tb .copy { stroke-width: 1.2; }
.tb.on { background: #2882ec; }
.tb-t { color: #fff; font: 700 18px/23px "Liberation Sans", sans-serif; }
.snip-sep { width: 1px; margin: 3px 2px; background: #555; flex: none; }
.style-btns { display: flex; height: 23px; background: #2882ec; flex: none; width: 48px; }
.tb-b { color: #fff; font: 700 18px/23px "DejaVu Serif", serif; }
.tb-a { color: #2882ec; font: 700 17px/23px "Liberation Sans", sans-serif; -webkit-text-stroke: 1px #fff; }
.opt-sep { width: 1px; height: 19px; background: #555; margin: 0 6px 0 2px; flex: none; }
.opt-sep.right { margin: 0 4px 0 5px; }
.font-select { width: 122px; height: 21px; flex: none; background: #e1e1e1; border: 1px solid #adadad; display: flex; align-items: center; padding-left: 1px; overflow: hidden; }
.font-name { font: 12.5px/19px "Noto Sans", sans-serif; color: #111; width: 104px; overflow: hidden; white-space: nowrap; flex: none; }
.caret { margin-left: 3px; border: 4px solid transparent; border-top: 4px solid #000; border-bottom: 0; }
.color-now { width: 22px; height: 22px; flex: none; border: 1px solid #000; background: linear-gradient(135deg, #ed1c24 0 71%, #000 71% 75%, transparent 75%), conic-gradient(from 200deg at 100% 100%, #e33, #fd0, #3c3, #3cf, #33e, #c3c); }
.swatches { margin-left: 1px; display: grid; grid-template-columns: repeat(10, 11px); grid-auto-rows: 11px; column-gap: 1.1px; row-gap: 1px; }
.swatches i { display: block; border: 1px solid #000; }
.c1 { background: #000; } .c2 { background: #7f7f7f; } .c3 { background: #880015; } .c4 { background: #ed1c24; } .c5 { background: #ff7f27; }
.c6 { background: #fff200; } .c7 { background: #22b14c; } .c8 { background: #00a2e8; } .c9 { background: #3f48cc; } .c10 { background: #a349a4; }
.c11 { background: #fff; } .c12 { background: #c3c3c3; } .c13 { background: #b97a57; } .c14 { background: #ffaec9; } .c15 { background: #ffc90e; }
.c16 { background: #efe4b0; } .c17 { background: #b5e61d; } .c18 { background: #99d9ea; } .c19 { background: #7092be; } .c20 { background: #c8bfe7; }

/* Taskbar */
.taskbar { height: 40px; flex: none; background: #0a0a0a; display: flex; align-items: center; position: relative; }
.start { width: 16px; height: 16px; margin-left: 16px; fill: #8c8c8c; flex: none; }
.cortana { width: 16px; height: 16px; margin-left: 32px; margin-right: 18px; fill: none; stroke: #a0a0a0; stroke-width: 2.2; flex: none; }
.app { width: 49px; height: 40px; flex: none; display: flex; flex-direction: column; align-items: center; padding-top: 8px; }
.app.current { background: #252525; width: 48px; margin-right: 1px; }
.app svg { width: 24px; height: 24px; flex: none; }
.app i { display: block; margin-top: auto; width: 40px; height: 2px; background: #3a5c7c; }
.app.current i { width: 100%; }
.app i.off { visibility: hidden; }
.term { font: 6px "Liberation Mono", monospace; fill: #ccc; }
.ij { font: 700 6.500px "Liberation Sans", sans-serif; fill: #ddd; }
.typora { font: 15px "Liberation Sans", sans-serif; text-anchor: middle; fill: #3c3c3c; }
.tray { margin-left: auto; width: 236px; margin-right: 0; height: 40px; display: flex; align-items: center; position: relative; }
.tray-grid { width: 12px; height: 14px; margin-left: 24px; background: #3e3e3e; }
.tray-bar { width: 10px; height: 2px; margin: 14px 0 0 -4px; background: #2f6e9a; }
.tray-green { width: 13px; height: 13px; margin-left: 16px; border-radius: 50%; background: #2a7a35; }
.tray-swoosh { width: 16px; height: 10px; margin-left: 9px; border-top: 3px solid #a3202a; border-left: 3px solid #1f6a9c; border-radius: 8px 8px 0 0; transform: rotate(-25deg); }
.tray-warn { width: 0; height: 0; margin: 10px 0 0 14px; border: 5px solid transparent; border-top: 0; border-bottom: 9px solid #8a6a12; }
.tray-box { width: 15px; height: 14px; margin-left: 90px; background: #3f3f3f; }
.tray-action { width: 17px; height: 17px; margin: 6px 0 0 -3px; border: 1px solid #4c4c4c; border-radius: 50%; }
.watermark { position: absolute; left: 1667px; top: 1050px; font: 15.8px/20px "Liberation Sans", sans-serif; color: #9b9b9b; white-space: nowrap; }
```
